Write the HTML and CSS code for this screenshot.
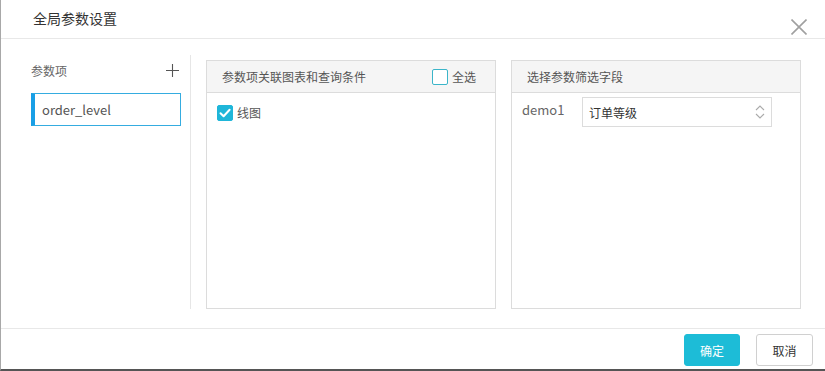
FILE: index.html
```html
<!DOCTYPE html>
<html lang="zh-CN">
<head>
    <meta charset="UTF-8">
    <title>全局参数设置</title>
    <link rel="stylesheet" href="styles.css">
</head>
<body>
    <div class="dialog">
        <div class="dialog-head">
            <h2 class="dialog-title">全局参数设置</h2>
            <button class="close" type="button" aria-label="关闭">
                <svg width="16" height="16" viewBox="0 0 16 16"><path d="M0.5 0.5L15.5 15.5M15.5 0.5L0.5 15.5" stroke="#a0a0a0" stroke-width="1.6" fill="none"/></svg>
            </button>
        </div>

        <div class="dialog-body">
            <aside class="param-list">
                <div class="param-list-head">
                    <span>参数项</span>
                    <button class="add" type="button" aria-label="添加">
                        <svg width="13" height="13" viewBox="0 0 13 13"><path d="M6.5 0V13M0 6.5H13" stroke="#555" stroke-width="1.1" fill="none"/></svg>
                    </button>
                </div>
                <div class="param-item active">order_level</div>
            </aside>

            <section class="panel">
                <div class="panel-head">
                    <span>参数项关联图表和查询条件</span>
                    <label class="check"><span class="box"></span>全选</label>
                </div>
                <div class="panel-body">
                    <label class="check">
                        <span class="box checked">
                            <svg width="16" height="16" viewBox="0 0 16 16"><path d="M3.5 8.2L6.6 11.2L12.6 4.8" stroke="#fff" stroke-width="2" fill="none" stroke-linecap="round" stroke-linejoin="round"/></svg>
                        </span>线图
                    </label>
                </div>
            </section>

            <section class="panel">
                <div class="panel-head">
                    <span>选择参数筛选字段</span>
                </div>
                <div class="panel-body field-body">
                    <div class="field-row">
                        <span class="field-name">demo1</span>
                        <div class="select">
                            <span>订单等级</span>
                            <svg width="10" height="16" viewBox="0 0 10 16"><path d="M1 6L5 2L9 6M1 10L5 14L9 10" stroke="#aaa" stroke-width="1.1" fill="none"/></svg>
                        </div>
                    </div>
                </div>
            </section>
        </div>

        <div class="dialog-foot">
            <button class="btn btn-primary" type="button">确定</button>
            <button class="btn" type="button">取消</button>
        </div>
    </div>
</body>
</html>
```

FILE: styles.css
```css
*{
    box-sizing: border-box;
}

body{
    margin: 0;
    background: #fff;
    font-family: "Noto Sans CJK SC", "Noto Sans", sans-serif;
    color: #333;
}

button{
    font-family: inherit;
    cursor: pointer;
}

.dialog{
    width: 825px;
    height: 371px;
    border-left: 1px solid #a8a8a8;
    border-bottom: 2px solid #555;
}

/* 头部 */
.dialog-head{
    display: flex;
    justify-content: space-between;
    height: 39px;
    padding: 0 18px 0 32px;
    border-bottom: 1px solid #e8e8e8;
}

.dialog-title{
    margin: 0;
    font-size: 14px;
    font-weight: normal;
    line-height: 37px;
    color: #333;
}

.close{
    align-self: flex-start;
    margin-top: 19px;
    padding: 0;
    width: 16px;
    height: 16px;
    border: 0;
    background: none;
}
.close svg{display: block;}

/* 内容 */
.dialog-body{
    display: flex;
    align-items: flex-start;
    height: 289px;
    padding-top: 21px;
}

.param-list{
    width: 190px;
    height: 254px;
    margin-top: -5px;
    padding: 5px 9px 0 30px;
    border-right: 1px solid #e6e6e6;
}

.param-list-head{
    display: flex;
    justify-content: space-between;
    align-items: center;
    height: 20px;
    font-size: 12px;
    color: #666;
}

.add{
    margin-right: 2px;
    padding: 0;
    width: 13px;
    height: 13px;
    border: 0;
    background: none;
}
.add svg{display: block;}

.param-item{
    height: 33px;
    margin-top: 13px;
    padding-left: 7px;
    border: 1px solid #35ace0;
    font-size: 13px;
    line-height: 31px;
    color: #555;
}
.param-item.active{border-left: 4px solid #199fe6;}

.panel{
    width: 290px;
    height: 249px;
    margin-left: 15px;
    border: 1px solid #dcdcdc;
}

.panel-head{
    display: flex;
    justify-content: space-between;
    align-items: center;
    height: 32px;
    padding: 0 19px 0 15px;
    background: #f5f5f5;
    border-bottom: 1px solid #dcdcdc;
    font-size: 12px;
    color: #555;
}

.check{
    display: flex;
    align-items: center;
    font-size: 12px;
    color: #555;
}

.box{
    display: inline-block;
    width: 16px;
    height: 16px;
    margin-right: 4px;
    border: 1px solid #3bb5c9;
    border-radius: 2px;
    background: #fff;
}

.box.checked{
    border-color: #1fb6d9;
    background: #1fb6d9;
}
.box.checked svg{
    display: block;
    margin: -1px;
}

.panel-body{
    padding: 11px 10px;
}

.field-body{
    padding-top: 4px;
}

.field-row{
    display: flex;
    align-items: center;
}

.field-name{
    width: 60px;
    margin-top: -6px;
    font-size: 13px;
    color: #666;
}

.select{
    display: flex;
    justify-content: space-between;
    align-items: center;
    width: 190px;
    height: 30px;
    padding: 0 6px 0 6px;
    border: 1px solid #dcdcdc;
    font-size: 12px;
    color: #333;
}

/* 底部 */
.dialog-foot{
    display: flex;
    justify-content: flex-end;
    gap: 16px;
    height: 41px;
    padding: 5px 12px 0 0;
    border-top: 1px solid #e8e8e8;
}

.btn{
    width: 57px;
    height: 32px;
    padding: 0;
    border: 1px solid #d0d0d0;
    border-radius: 3px;
    background: #fff;
    font-size: 12px;
    color: #333;
}

.btn-primary{
    width: 56px;
    border-color: #1dbcd7;
    background: #1dbcd7;
    color: #fff;
}
```
